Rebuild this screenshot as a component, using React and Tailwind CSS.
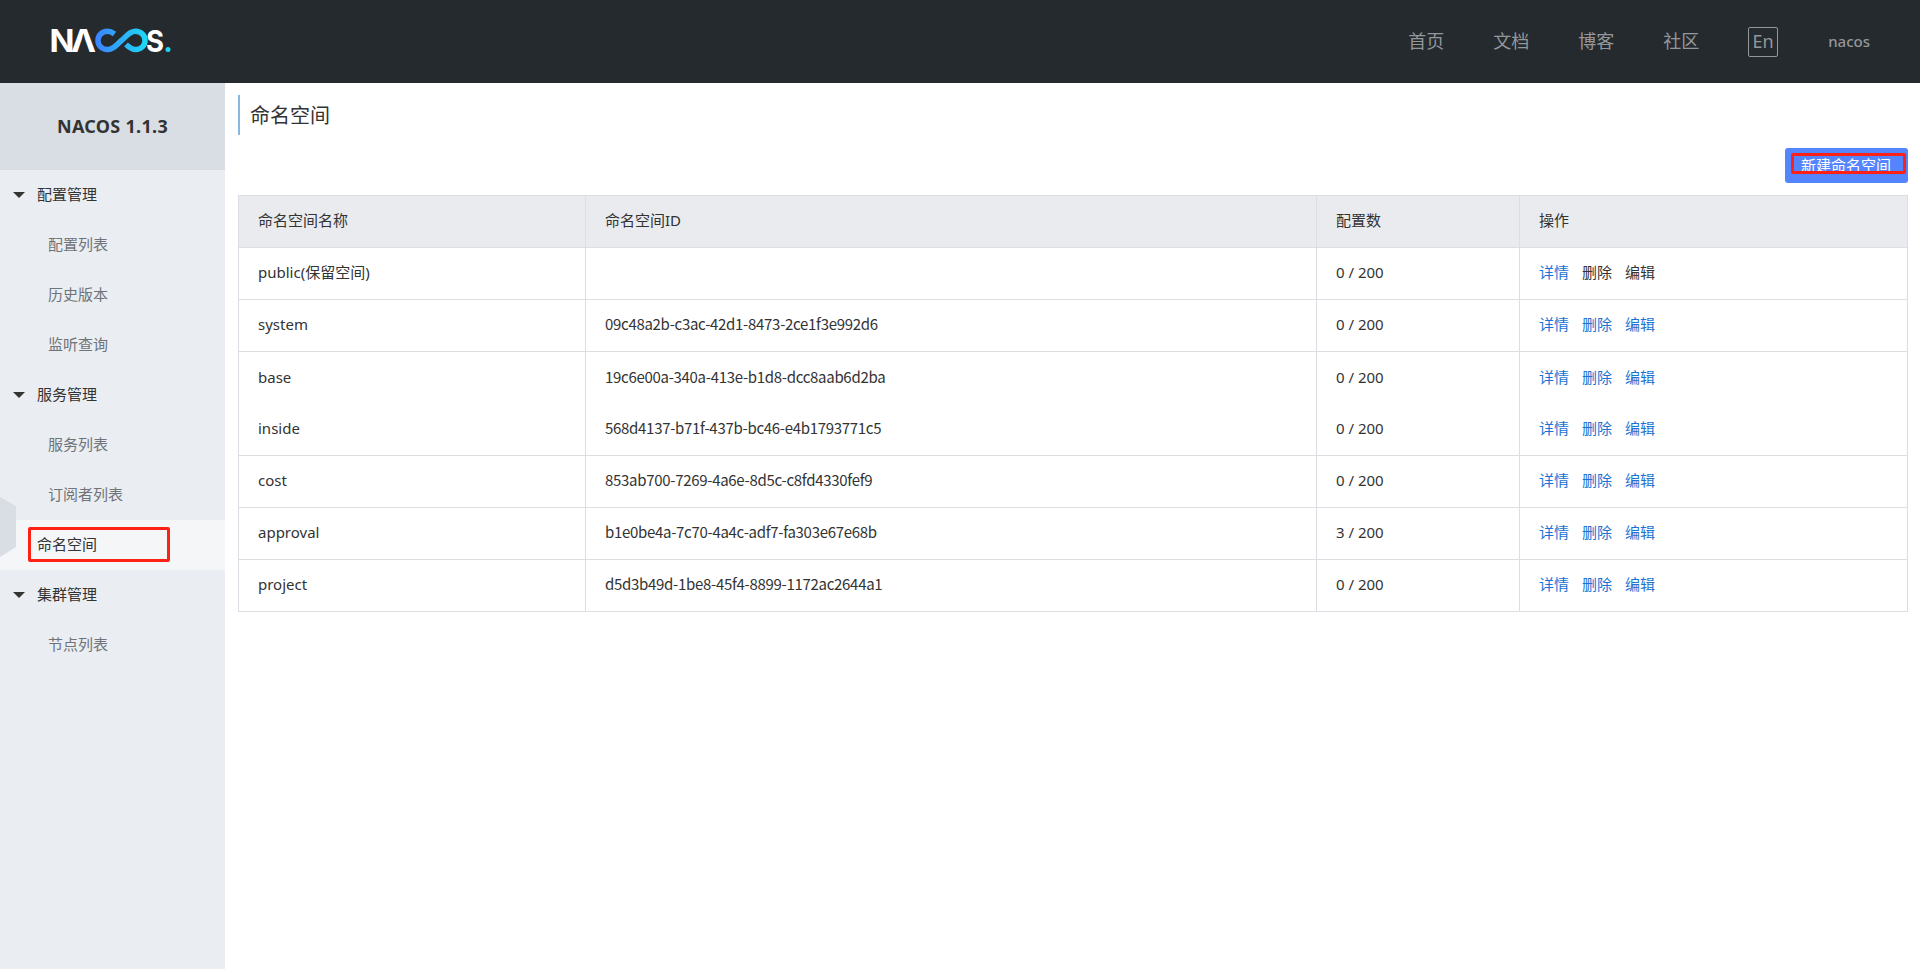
import React from "react";

const font = { fontFamily: '"Noto Sans", "Noto Sans CJK SC", sans-serif' };
const cjkLatin = { fontFamily: '"Noto Sans CJK SC", "Noto Sans", sans-serif' };

const rows = [
  ["public(保留空间)", "", "0 / 200"],
  ["system", "09c48a2b-c3ac-42d1-8473-2ce1f3e992d6", "0 / 200"],
  ["base", "19c6e00a-340a-413e-b1d8-dcc8aab6d2ba", "0 / 200"],
  ["inside", "568d4137-b71f-437b-bc46-e4b1793771c5", "0 / 200"],
  ["cost", "853ab700-7269-4a6e-8d5c-c8fd4330fef9", "0 / 200"],
  ["approval", "b1e0be4a-7c70-4a4c-adf7-fa303e67e68b", "3 / 200"],
  ["project", "d5d3b49d-1be8-45f4-8899-1172ac2644a1", "0 / 200"],
];

function Logo() {
  return (
    <svg width="126" height="44" viewBox="47 19.500 126 44" aria-label="NACOS">
      <defs>
        <linearGradient id="inf" x1="0" y1="0" x2="1" y2="0">
          <stop offset="0" stopColor="#3a86ff" />
          <stop offset="1" stopColor="#1fd6f5" />
        </linearGradient>
      </defs>
      <text x="47.500" y="51" fill="#fff" fontFamily="Inter" fontWeight="700" fontSize="31" textLength="25" lengthAdjust="spacingAndGlyphs">N</text>
      <text x="69" y="51" fill="#fff" fontFamily="Inter" fontWeight="700" fontSize="31" textLength="25" lengthAdjust="spacingAndGlyphs">Λ</text>
      <path
        d="M112.500 33.500C110.500 32 108 30.800 105.500 30.800C99.800 30.800 96 35 96 40C96 45 99.800 49 105.500 49C112 49 114.500 44 119.500 40C124.500 36 127 30.800 133.500 30.800C139.200 30.800 143 35 143 40C143 45 139.200 49 133.500 49C129.500 49 127 46.800 124 44"
        fill="none"
        stroke="url(#inf)"
        strokeWidth="5.500"
      />
      <text x="144" y="51" fill="#fff" fontFamily="Inter" fontWeight="700" fontSize="30" textLength="18" lengthAdjust="spacingAndGlyphs">S</text>
      <circle cx="166" cy="49" r="2.500" fill="#1fd6f5" />
    </svg>
  );
}

function Caret() {
  return (
    <svg width="12" height="6" viewBox="0 0 12 6" className="absolute left-[13px] top-[22px]">
      <polygon points="0,0 12,0 6,6" fill="#333333" />
    </svg>
  );
}

function Group({ label }) {
  return (
    <div className="relative h-[50px] pl-[37px] leading-[49px] text-[15px] text-[#333333]">
      <Caret />
      {label}
    </div>
  );
}

function Item({ label }) {
  return <div className="h-[50px] pl-[48px] leading-[49px] text-[15px] text-[#6f7479]">{label}</div>;
}

function Sidebar() {
  return (
    <aside className="w-[225px] shrink-0 bg-[#eaedf1]">
      <div className="h-[87px] bg-[#d9dee4] text-center text-[18px] font-bold leading-[87px] tracking-[0.3px] text-[#333333]">NACOS 1.1.3</div>
      <Group label="配置管理" />
      <Item label="配置列表" />
      <Item label="历史版本" />
      <Item label="监听查询" />
      <Group label="服务管理" />
      <Item label="服务列表" />
      <Item label="订阅者列表" />
      <div className="relative h-[50px] bg-[#f4f6f8] pl-[37px] leading-[49px] text-[15px] text-[#333333]">
        <svg width="16" height="62" viewBox="0 0 16 62" className="absolute left-0 top-[-23px]">
          <polygon points="0,0 16,9 16,50 0,60" fill="#d9dee4" />
        </svg>
        <div className="absolute left-[28px] top-[7px] h-[35px] w-[142px] rounded-[2px] border-[3px] border-[#ff2016]" />
        命名空间
      </div>
      <Group label="集群管理" />
      <Item label="节点列表" />
    </aside>
  );
}

const th = "h-[52px] border border-[#dcdee3] bg-[#e9ebef] pb-[2px] pl-[19px] text-left text-[15px] font-normal text-[#333333]";

function Table() {
  return (
    <table className="w-[1670px] table-fixed border-collapse">
      <colgroup>
        <col className="w-[347px]" />
        <col className="w-[731px]" />
        <col className="w-[203px]" />
        <col />
      </colgroup>
      <thead>
        <tr>
          <th className={th}>命名空间名称</th>
          <th className={th}>命名空间ID</th>
          <th className={th}>配置数</th>
          <th className={th}>操作</th>
        </tr>
      </thead>
      <tbody>
        {rows.map((r, i) => {
          const td =
            i === 2
              ? "h-[52px] border-x border-[#dcdee3] pb-[2px] pl-[19px] text-[15px] text-[#333333]"
              : i === 3
                ? "h-[52px] border-x border-b border-[#dcdee3] pb-[2px] pl-[19px] text-[15px] text-[#333333]"
                : "h-[52px] border border-[#dcdee3] pb-[2px] pl-[19px] text-[15px] text-[#333333]";
          const other = i === 0 ? "text-[#333333]" : "text-[#1a73d2]";
          return (
            <tr key={r[0]}>
              <td className={td}>{r[0]}</td>
              <td className={td}>
                <span style={cjkLatin} className="tracking-[-0.3px]">{r[1]}</span>
              </td>
              <td className={td}>{r[2]}</td>
              <td className={td}>
                <span className="text-[#1a73d2]">详情</span>
                <span className={`ml-[13px] ${other}`}>删除</span>
                <span className={`ml-[13px] ${other}`}>编辑</span>
              </td>
            </tr>
          );
        })}
      </tbody>
    </table>
  );
}

export default function App() {
  return (
    <div style={font} className="flex min-h-screen flex-col bg-white">
      <header className="flex h-[83px] items-center justify-between bg-[#252a2f] pl-[49px] pr-[50px]">
        <Logo />
        <nav className="flex items-center text-[#94979a]">
          <span className="text-[18px]">首页</span>
          <span className="ml-[49px] text-[18px]">文档</span>
          <span className="ml-[49px] text-[18px]">博客</span>
          <span className="ml-[49px] text-[18px]">社区</span>
          <span className="ml-[49px] flex h-[30px] w-[30px] items-center justify-center rounded-[2px] border border-[#94979a] text-[18px]">En</span>
          <span className="ml-[50px] text-[15px] font-medium">nacos</span>
        </nav>
      </header>
      <div className="flex flex-1">
        <Sidebar />
        <main className="flex-1 pl-[13px] pr-[12px] pt-[12px]">
          <div className="h-[40px] border-l-2 border-[#88b7e0] pl-[10px] text-[20px] leading-[42px] text-[#333333]">命名空间</div>
          <div className="mt-[13px] flex justify-end">
            <div className="relative h-[35px] w-[123px] rounded-[3px] bg-[#5584ff] pl-[16px] text-[15px] leading-[34px] text-white">
              新建命名空间
              <div className="absolute left-[6px] top-[5px] h-[21px] w-[115px] rounded-[2px] border-[3px] border-[#ff2016]" />
            </div>
          </div>
          <div className="mt-[12px]">
            <Table />
          </div>
        </main>
      </div>
    </div>
  );
}
